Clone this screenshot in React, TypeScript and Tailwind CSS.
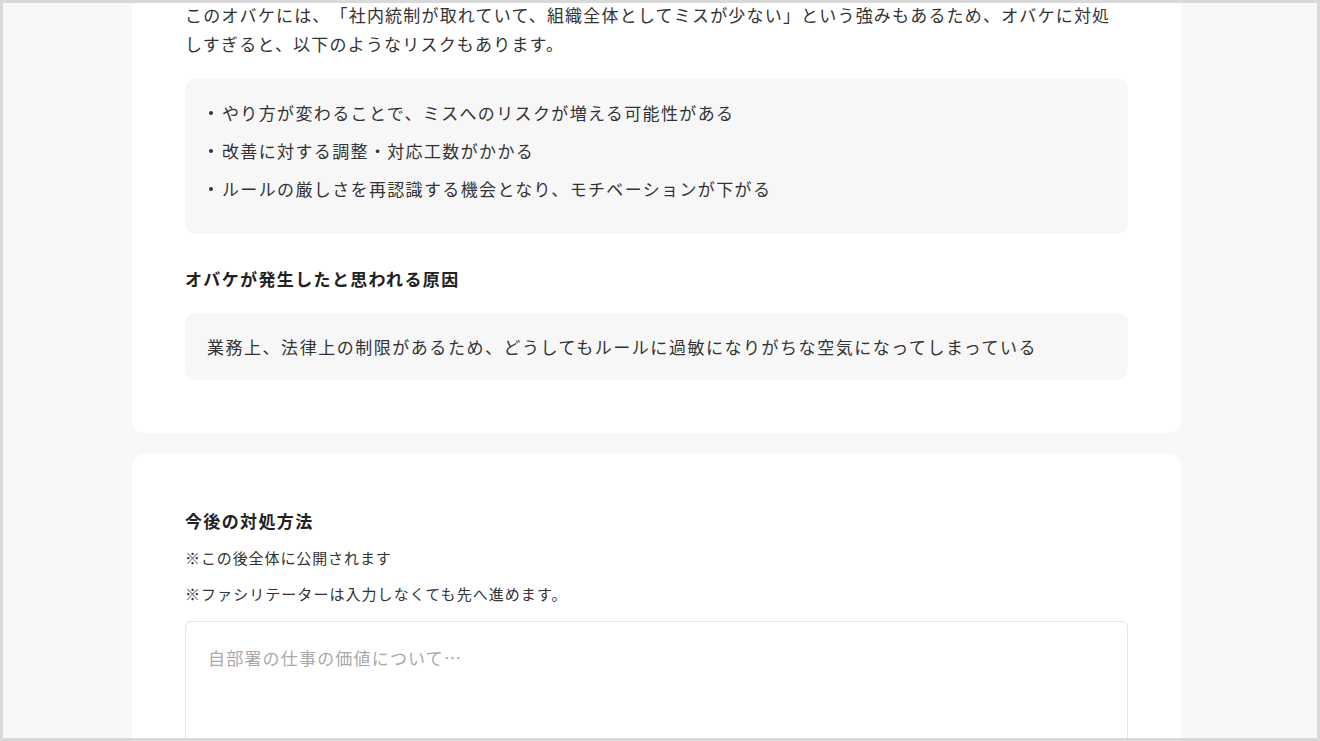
import React from "react";

const FONT = { fontFamily: '"Noto Sans CJK JP", "Noto Sans", sans-serif' };

const risks = [
  "やり方が変わることで、ミスへのリスクが増える可能性がある",
  "改善に対する調整・対応工数がかかる",
  "ルールの厳しさを再認識する機会となり、モチベーションが下がる",
];

export default function App() {
  return (
    <div
      style={FONT}
      className="h-[741px] w-[1320px] overflow-hidden border-[3px] border-[#d9d9d9] bg-[#f8f8f8] text-[#333] [text-spacing-trim:space-all]"
    >
      <div className="ml-[129px] flex w-[1049px] flex-col gap-[21px]">
        {/* card 1 (scrolled, top cut off) */}
        <section className="-mt-[3px] rounded-b-[12px] bg-white px-[53px] pb-[53px]">
          <p className="text-[17px] leading-[29px] tracking-[0.07em]">
            このオバケには、「社内統制が取れていて、組織全体としてミスが少ない」という強みもあるため、オバケに対処しすぎると、以下のようなリスクもあります。
          </p>
          <ul className="mt-[21px] rounded-[10px] bg-[#f7f7f7] px-[22px] pb-[22px] pt-[19px]">
            {risks.map((r) => (
              <li key={r} className="mb-[9px] flex items-center text-[17px] leading-[29px] tracking-[0.08em]">
                <span className="ml-[2px] h-[4px] w-[4px] shrink-0 rounded-full bg-[#333]" />
                <span className="ml-[9px]">{r}</span>
              </li>
            ))}
          </ul>
          <h3 className="mt-[30px] text-[17px] font-bold leading-[29px] tracking-[0.08em] text-[#222]">
            オバケが発生したと思われる原因
          </h3>
          <div className="mt-[20px] rounded-[10px] bg-[#f7f7f7] px-[22px] py-[19px] text-[17px] leading-[29px] tracking-[0.09em]">
            業務上、法律上の制限があるため、どうしてもルールに過敏になりがちな空気になってしまっている
          </div>
        </section>

        {/* card 2 */}
        <section className="rounded-[12px] bg-white px-[53px] pt-[52px] pb-[53px]">
          <h3 className="text-[17px] font-bold leading-[29px] tracking-[0.08em] text-[#222]">
            今後の対処方法
          </h3>
          <p className="mt-[10px] text-[15px] leading-[26px] tracking-[0.06em]">
            ※この後全体に公開されます
          </p>
          <p className="mt-[10px] text-[15px] leading-[26px] tracking-[0.07em]">
            ※ファシリテーターは入力しなくても先へ進めます。
          </p>
          <textarea
            style={FONT}
            placeholder="自部署の仕事の価値について…"
            className="mt-[14px] block h-[200px] w-full resize-none rounded-[6px] border-[1.5px] border-[#e6e6e6] bg-white px-[22px] py-[21px] text-[17px] leading-[29px] tracking-[0.07em] outline-none placeholder:text-[#aaa]"
          />
        </section>
      </div>
    </div>
  );
}
